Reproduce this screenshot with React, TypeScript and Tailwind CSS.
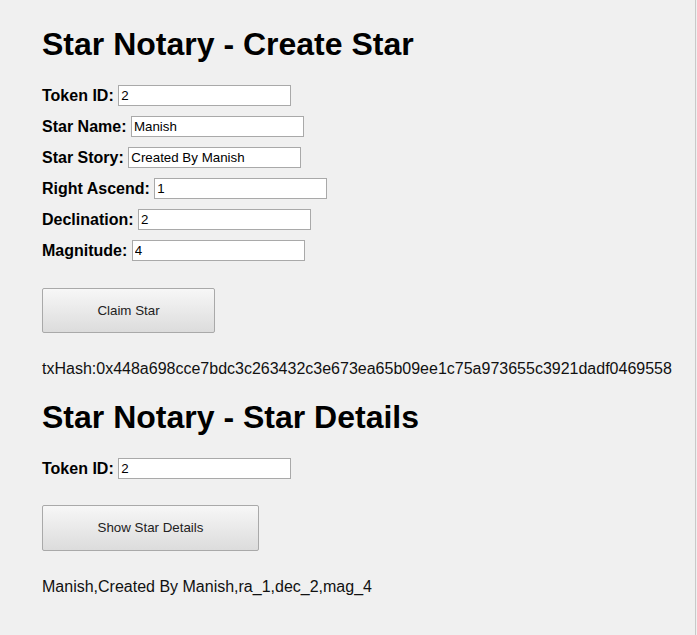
import React from "react";

const font = { fontFamily: '"Liberation Sans", Arial, sans-serif' };

function Row({ label, value }: { label: string; value: string }) {
  return (
    <div className="flex h-[31px] items-center">
      <span className="whitespace-pre text-[16px] font-bold text-black">{label + " "}</span>
      <input
        readOnly
        value={value}
        className="h-[21px] w-[173px] border border-[#a9a9a9] bg-white px-[2px] text-[13.33px] text-black outline-none"
        style={font}
      />
    </div>
  );
}

function Btn({ children, w }: { children: React.ReactNode; w: string }) {
  return (
    <button
      className={`${w} rounded-[2px] border border-[#a9a9a9] bg-gradient-to-b from-[#f7f7f7] to-[#dcdcdc] text-[13.33px] text-[#222]`}
      style={font}
    >
      {children}
    </button>
  );
}

export default function App() {
  return (
    <div className="h-[635px] w-full bg-[#f0f0f0]" style={font}>
      <div className="h-full w-[696px] border-r border-[#c9c9c9] pl-[42px] pt-[26px]">
        <h1 className="text-[32px] font-bold leading-[37px] text-black">Star Notary - Create Star</h1>
        <div className="mt-[17px] flex flex-col">
          <Row label="Token ID:" value="2" />
          <Row label="Star Name:" value="Manish" />
          <Row label="Star Story:" value="Created By Manish" />
          <Row label="Right Ascend:" value="1" />
          <Row label="Declination:" value="2" />
          <Row label="Magnitude:" value="4" />
        </div>
        <div className="mt-[22px]">
          <Btn w="w-[173px] h-[45px]">Claim Star</Btn>
        </div>
        <p className="mt-[27px] text-[16px] leading-[18px] text-[#111]">
          txHash:0x448a698cce7bdc3c263432c3e673ea65b09ee1c75a973655c3921dadf0469558
        </p>
        <h1 className="mt-[21px] text-[32px] font-bold leading-[37px] text-black">Star Notary - Star Details</h1>
        <div className="mt-[17px]">
          <Row label="Token ID:" value="2" />
        </div>
        <div className="mt-[21px]">
          <Btn w="w-[217px] h-[46px]">Show Star Details</Btn>
        </div>
        <p className="mt-[27px] text-[16px] leading-[18px] text-[#111]">
          Manish,Created By Manish,ra_1,dec_2,mag_4
        </p>
      </div>
    </div>
  );
}
